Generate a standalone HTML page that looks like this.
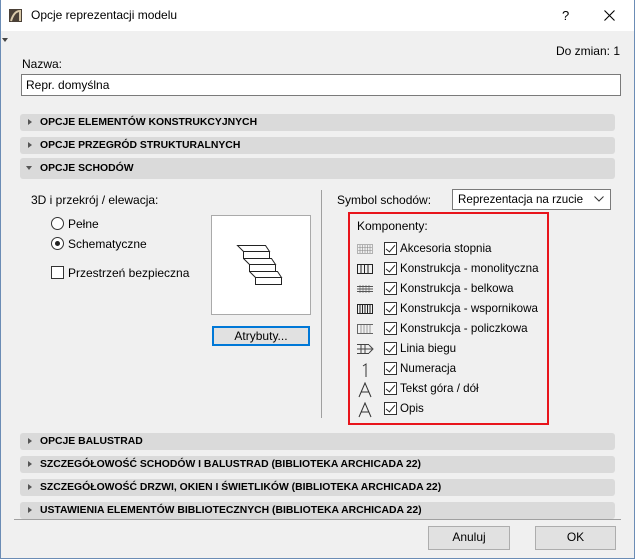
<!DOCTYPE html>
<html><head><meta charset="utf-8"><style>
*{box-sizing:border-box;margin:0;padding:0}
body{width:635px;height:559px;overflow:hidden;background:#f0f0f0;font-family:"Liberation Sans",sans-serif;font-size:12px;color:#000;position:relative}
.a{position:absolute;white-space:nowrap}
.frame{position:absolute;left:0;top:0;width:635px;height:559px;border:1px solid #6b8cb5;border-top:none}
.title{position:absolute;left:0;top:0;width:635px;height:31px;background:#fff}
.bar{position:absolute;left:20px;width:595px;height:17px;background:#dadada;border-radius:3px;font-weight:bold;font-size:10.4px;line-height:17px;padding-left:20px;white-space:nowrap}
.bar:before{content:"";position:absolute;left:8px;top:5px;border-left:4px solid #555;border-top:3.5px solid transparent;border-bottom:3.5px solid transparent}
.bar.open:before{left:6px;top:8px;border-top:4px solid #555;border-left:3.5px solid transparent;border-right:3.5px solid transparent;border-bottom:none}
.cb{position:absolute;width:13px;height:13px;border:1px solid #333;background:#fff}
.btn{position:absolute;background:#e1e1e1;border:1px solid #adadad;text-align:center;line-height:21px}
.row{position:absolute;left:357px;width:185px;height:16px;white-space:nowrap}
.row svg{position:absolute;left:0;top:0}
.row .t{position:absolute;left:43px;top:0;line-height:14px;font-size:11.6px}
.row .c{position:absolute;left:27px;top:0;width:13px;height:13px;border:1px solid #333;background:#fff}
.row .c:after{content:"";position:absolute;left:3px;top:0px;width:4px;height:8px;border-right:1.3px solid #222;border-bottom:1.3px solid #222;transform:rotate(40deg)}
</style></head><body>
<div class="title"></div>
<div class="frame"></div>
<svg class="a" style="left:9px;top:9px" width="13" height="13"><rect width="13" height="13" fill="#4a4036"/><path d="M2 12 Q5 2 11 2 L11 12" stroke="#d8c8a8" stroke-width="2" fill="none"/></svg>
<div class="a" style="left:31px;top:8px;font-size:12px">Opcje reprezentacji modelu</div>
<div class="a" style="left:562px;top:8px;font-size:13px">?</div>
<svg class="a" style="left:604px;top:10px" width="11" height="11"><path d="M0.5 0.5L10.5 10.5M10.5 0.5L0.5 10.5" stroke="#000" stroke-width="1.1"/></svg>
<div class="a" style="left:2px;top:38px;border-top:4px solid #444;border-left:3px solid transparent;border-right:3px solid transparent"></div>
<div class="a" style="right:15px;top:44px">Do zmian: 1</div>
<div class="a" style="left:22px;top:57px">Nazwa:</div>
<div class="a" style="left:21px;top:74px;width:600px;height:22px;background:#fff;border:1px solid #7a7a7a;padding:3px 0 0 4px">Repr. domyślna</div>
<div class="bar" style="top:114px">OPCJE ELEMENTÓW KONSTRUKCYJNYCH</div>
<div class="bar" style="top:137px">OPCJE PRZEGRÓD STRUKTURALNYCH</div>
<div class="bar open" style="top:158px;height:21px;line-height:21px">OPCJE SCHODÓW</div>

<div class="a" style="left:31px;top:193px">3D i przekrój / elewacja:</div>
<div class="a" style="left:51px;top:217px;width:13px;height:13px;border:1px solid #333;border-radius:50%;background:#fff"></div>
<div class="a" style="left:68px;top:217px">Pełne</div>
<div class="a" style="left:51px;top:237px;width:13px;height:13px;border:1px solid #333;border-radius:50%;background:#fff"></div>
<div class="a" style="left:55px;top:241px;width:5px;height:5px;border-radius:50%;background:#222"></div>
<div class="a" style="left:68px;top:237px">Schematyczne</div>
<div class="cb" style="left:51px;top:266px"></div>
<div class="a" style="left:68px;top:266px">Przestrzeń bezpieczna</div>
<div class="a" style="left:211px;top:215px;width:100px;height:100px;background:#fff;border:1px solid #aaa"></div>
<svg class="a" style="left:236px;top:244px" width="52" height="42" fill="none" stroke="#222" stroke-width="1"><path d="M1.5 1.5H29.5L33.5 7.5H7.5L1.5 1.5ZM7.5 7.5V14.5H33.5V7.5M7.5 14.5H35.5L39.5 20.5H13.5L7.5 14.5M13.5 20.5V27.5H39.5V20.5M13.5 27.5H41.5L45.5 33.5H19.5L13.5 27.5M19.5 33.5V40.5H45.5V33.5"/></svg>
<div class="btn" style="left:212px;top:326px;width:98px;height:20px;border:2px solid #0078d7;line-height:16px">Atrybuty...</div>

<div class="a" style="left:321px;top:190px;width:1px;height:228px;background:#a0a0a0"></div>
<div class="a" style="left:337px;top:193px">Symbol schodów:</div>
<div class="a" style="left:452px;top:189px;width:159px;height:21px;background:#fff;border:1px solid #7a7a7a;padding:3px 0 0 5px;font-size:11.6px">Reprezentacja na rzucie</div>
<svg class="a" style="left:594px;top:196px" width="10" height="6"><path d="M0.5 0.5L5 5L9.5 0.5" stroke="#333" fill="none"/></svg>
<div class="a" style="left:348px;top:212px;width:201px;height:213px;border:2px solid #e8141b"></div>
<div class="a" style="left:357px;top:219px">Komponenty:</div>

<div class="row" style="top:242px"><svg width="17" height="14" stroke="#888" fill="none" stroke-width=".6"><rect x="0.5" y="2.5" width="15" height="9"/><path d="M3 3v8M5.5 3v8M8 3v8M10.5 3v8M13 3v8M1 5.5h14M1 8.5h14"/></svg><div class="c"></div><div class="t">Akcesoria stopnia</div></div>
<div class="row" style="top:262px"><svg width="17" height="14" stroke="#222" fill="none"><rect x="0.5" y="2.5" width="15" height="9"/><path d="M4 3v8M7.5 3v8M11 3v8"/></svg><div class="c"></div><div class="t">Konstrukcja - monolityczna</div></div>
<div class="row" style="top:282px"><svg width="17" height="14" stroke="#555" fill="none"><path d="M0 4.5h16M0 9.5h16M0 7h16"/><path d="M3 3v8M6 3v8M9 3v8M12 3v8" stroke-width=".6"/></svg><div class="c"></div><div class="t">Konstrukcja - belkowa</div></div>
<div class="row" style="top:302px"><svg width="17" height="14" stroke="#222" fill="none"><rect x="0.5" y="2.5" width="15" height="9"/><path d="M3 3v8M5.5 3v8M8 3v8M10.5 3v8M13 3v8"/></svg><div class="c"></div><div class="t">Konstrukcja - wspornikowa</div></div>
<div class="row" style="top:322px"><svg width="17" height="14" stroke="#666" fill="none"><path d="M0 2.5h16M0 11.5h16M0.5 3v8"/><path d="M4 3v8M7 3v8M10 3v8M13 3v8" stroke-width=".6"/></svg><div class="c"></div><div class="t">Konstrukcja - policzkowa</div></div>
<div class="row" style="top:342px"><svg width="17" height="14" stroke="#444" fill="none"><path d="M0 2.5h12M0 11.5h12M0 7h15M12 3l4 4l-4 4M4 3v8M8 3v8"/></svg><div class="c"></div><div class="t">Linia biegu</div></div>
<div class="row" style="top:362px"><svg width="17" height="16" stroke="#333" fill="none"><path d="M6 4l3-2v13"/></svg><div class="c"></div><div class="t">Numeracja</div></div>
<div class="row" style="top:382px"><svg width="17" height="16" stroke="#333" fill="none"><path d="M2 15L8 1L14 15M4.5 10h7"/></svg><div class="c"></div><div class="t">Tekst góra / dół</div></div>
<div class="row" style="top:402px"><svg width="17" height="16" stroke="#333" fill="none"><path d="M2 15L8 1L14 15M4.5 10h7"/></svg><div class="c"></div><div class="t">Opis</div></div>

<div class="bar" style="top:433px">OPCJE BALUSTRAD</div>
<div class="bar" style="top:456px">SZCZEGÓŁOWOŚĆ SCHODÓW I BALUSTRAD (BIBLIOTEKA ARCHICADA 22)</div>
<div class="bar" style="top:479px">SZCZEGÓŁOWOŚĆ DRZWI, OKIEN I ŚWIETLIKÓW (BIBLIOTEKA ARCHICADA 22)</div>
<div class="bar" style="top:502px">USTAWIENIA ELEMENTÓW BIBLIOTECZNYCH (BIBLIOTEKA ARCHICADA 22)</div>
<div class="a" style="left:14px;top:519px;width:607px;height:1px;background:#a0a0a0"></div>
<div class="btn" style="left:428px;top:526px;width:82px;height:24px">Anuluj</div>
<div class="btn" style="left:535px;top:526px;width:81px;height:24px">OK</div>
</body></html>
